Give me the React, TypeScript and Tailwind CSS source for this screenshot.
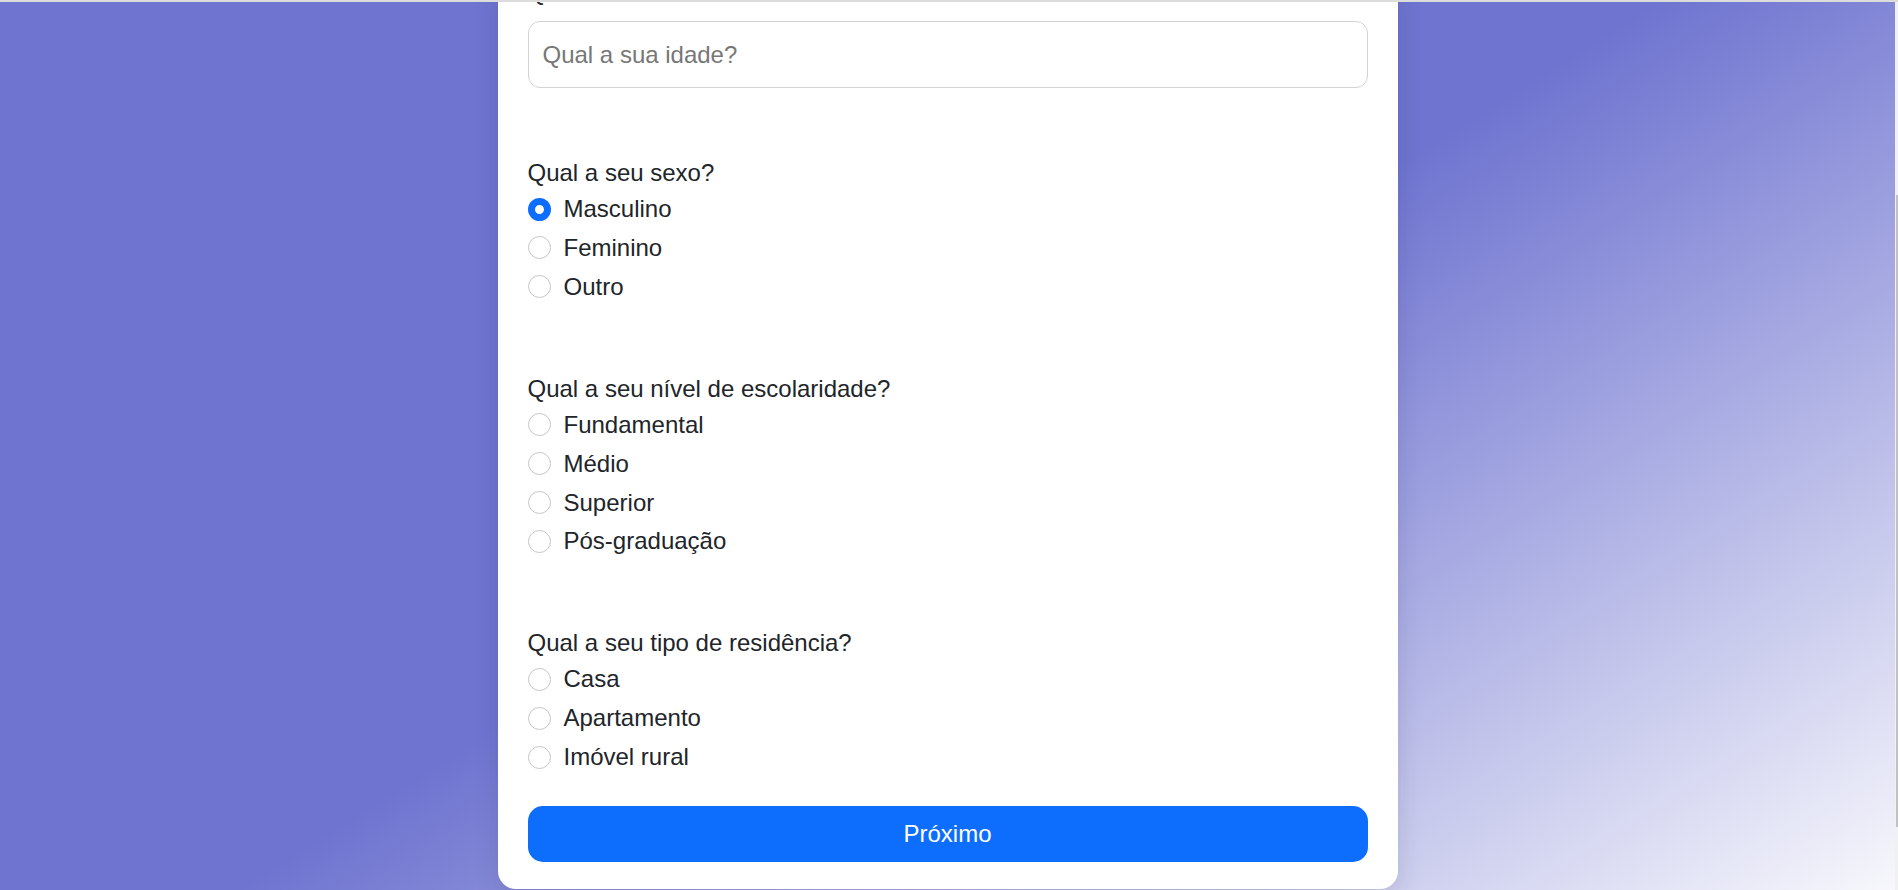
import React from "react";

type Group = {
  label: string;
  name: string;
  options: string[];
  checked?: string;
};

const groups: Group[] = [
  {
    label: "Qual a seu sexo?",
    name: "sexo",
    options: ["Masculino", "Feminino", "Outro"],
    checked: "Masculino",
  },
  {
    label: "Qual a seu nível de escolaridade?",
    name: "escolaridade",
    options: ["Fundamental", "Médio", "Superior", "Pós-graduação"],
  },
  {
    label: "Qual a seu tipo de residência?",
    name: "residencia",
    options: ["Casa", "Apartamento", "Imóvel rural"],
  },
];

function Radio({ label, checked }: { label: string; checked?: boolean }) {
  return (
    <label className="flex h-[36px] items-center">
      {checked ? (
        <span className="h-[23px] w-[23px] shrink-0 rounded-full border-[7px] border-[#0d6efd] bg-white" />
      ) : (
        <span className="h-[23px] w-[23px] shrink-0 rounded-full border-[1.5px] border-[#c6c6c6] bg-white" />
      )}
      <span className="ml-[13px] leading-[36px]">{label}</span>
    </label>
  );
}

export default function App() {
  return (
    <div className="flex h-[890px] w-full flex-col overflow-hidden font-['Liberation_Sans',Arial,sans-serif] text-[24px] text-[#212529]">
      <div className="h-[2px] shrink-0 bg-[#dcdcdc]" />
      <div className="flex min-h-0 flex-1">
        <main className="flex min-w-0 flex-1 justify-center overflow-hidden bg-[linear-gradient(148deg,#6f74d0_50%,#f7f7fc_100%)]">
          <form className="mt-[-28px] flex h-max w-[900px] flex-col rounded-[18px] bg-white px-[30px] pb-[27px] shadow-[0_6px_24px_rgba(40,40,90,0.15)]">
            <label className="h-[36px] leading-[36px]">Qual a sua idade?</label>
            <input
              type="number"
              placeholder="Qual a sua idade?"
              className="mt-[11px] h-[67px] rounded-[12px] border border-[#d4d4d4] bg-white px-[14px] outline-none placeholder:text-[#777777]"
            />

            {groups.map((g, i) => (
              <div
                key={g.name}
                className={i === 0 ? "mt-[67px] flex flex-col" : "mt-[66px] flex flex-col"}
              >
                <div className="h-[36px] leading-[36px]">{g.label}</div>
                <div className="flex flex-col gap-[2.9px]">
                  {g.options.map((o) => (
                    <Radio key={o} label={o} checked={g.checked === o} />
                  ))}
                </div>
              </div>
            ))}

            <button
              type="button"
              className="mt-[31px] h-[56px] w-full rounded-[15px] bg-[#0d6efd] text-white"
            >
              Próximo
            </button>
          </form>
        </main>
        <div className="w-[3px] shrink-0 bg-[#f1f1f1]">
          <div className="ml-auto mt-[193px] h-[632px] w-[2px] bg-[#c1c1c1]" />
        </div>
      </div>
    </div>
  );
}
